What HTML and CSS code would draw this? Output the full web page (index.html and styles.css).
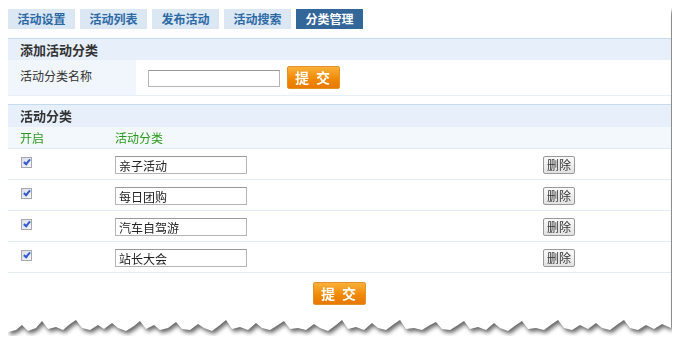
FILE: index.html
```html
<!DOCTYPE html>
<html lang="zh-CN">
<head>
    <meta charset="UTF-8">
    <title>分类管理</title>
    <link rel="stylesheet" href="styles.css">
</head>
<body>
    <div class="paper">
        <div class="panel">
            <div class="tabs">
                <a href="#">活动设置</a>
                <a href="#">活动列表</a>
                <a href="#">发布活动</a>
                <a href="#">活动搜索</a>
                <a href="#" class="active">分类管理</a>
            </div>

            <div class="section-title">添加活动分类</div>
            <div class="form-row">
                <div class="form-label">活动分类名称</div>
                <div class="form-field">
                    <input type="text" class="name-input">
                    <button class="btn-submit">提&nbsp;交</button>
                </div>
            </div>

            <div class="section-title second">活动分类</div>
            <div class="cat-head">
                <span class="col-on">开启</span>
                <span class="col-name">活动分类</span>
            </div>
            <div class="cat-row">
                <span class="col-on"><span class="check"></span></span>
                <span class="col-name"><input type="text" class="cat-input" value="亲子活动"></span>
                <button class="btn-del">删除</button>
            </div>
            <div class="cat-row">
                <span class="col-on"><span class="check"></span></span>
                <span class="col-name"><input type="text" class="cat-input" value="每日团购"></span>
                <button class="btn-del">删除</button>
            </div>
            <div class="cat-row">
                <span class="col-on"><span class="check"></span></span>
                <span class="col-name"><input type="text" class="cat-input" value="汽车自驾游"></span>
                <button class="btn-del">删除</button>
            </div>
            <div class="cat-row">
                <span class="col-on"><span class="check"></span></span>
                <span class="col-name"><input type="text" class="cat-input" value="站长大会"></span>
                <button class="btn-del">删除</button>
            </div>

            <div class="footer">
                <button class="btn-submit">提&nbsp;交</button>
            </div>
        </div>
    </div>
</body>
</html>
```

FILE: styles.css
```css
body {
    margin: 8px;
    background-color: #fff;
    font-family: "Noto Sans CJK SC", "DejaVu Sans", sans-serif;
    font-size: 12px;
    color: #333;
}
.paper {
    width: 663px;
    filter: drop-shadow(2px 3px 2px rgba(0, 0, 0, 0.6));
}
.panel {
    background-color: #fff;
    min-height: 328px;
    clip-path: polygon(0 324px, 8px 322px, 14px 317px, 20px 323px, 28px 320px, 34px 313px, 40px 321px, 48px 319px, 55px 322px, 62px 316px, 68px 312px, 74px 320px, 82px 322px, 90px 317px, 96px 321px, 104px 315px, 110px 320px, 118px 323px, 126px 318px, 132px 313px, 138px 321px, 146px 317px, 152px 322px, 160px 320px, 168px 314px, 174px 321px, 182px 322px, 190px 316px, 196px 320px, 204px 323px, 212px 317px, 218px 312px, 224px 321px, 232px 319px, 240px 322px, 248px 315px, 254px 320px, 262px 322px, 270px 317px, 276px 313px, 282px 321px, 290px 320px, 298px 322px, 306px 316px, 312px 320px, 320px 323px, 328px 317px, 334px 312px, 340px 321px, 348px 319px, 356px 322px, 364px 315px, 370px 320px, 378px 322px, 386px 316px, 392px 312px, 398px 321px, 406px 320px, 414px 322px, 422px 317px, 428px 314px, 434px 321px, 442px 322px, 450px 317px, 456px 313px, 462px 321px, 470px 319px, 478px 322px, 486px 315px, 492px 320px, 500px 323px, 508px 317px, 514px 313px, 520px 321px, 528px 320px, 536px 322px, 544px 316px, 550px 312px, 556px 320px, 564px 322px, 572px 317px, 580px 321px, 588px 315px, 594px 320px, 602px 322px, 610px 316px, 616px 312px, 622px 320px, 630px 322px, 638px 317px, 646px 321px, 654px 316px, 663px 320px, 663px 0, 0 0);
}

/* tabs */
.tabs {
    display: flex;
    gap: 5px;
    padding-top: 1px;
    height: 20px;
    margin-bottom: 9px;
}
.tabs a {
    width: 67px;
    height: 20px;
    line-height: 20px;
    text-align: center;
    text-decoration: none;
    font-weight: bold;
    color: #2c6aa5;
    background-color: #dbe7f3;
}
.tabs a.active {
    background-color: #336699;
    color: #fff;
}

/* section headers */
.section-title {
    height: 21px;
    line-height: 21px;
    padding-left: 12px;
    border-top: 1px solid #c6daee;
    background-color: #e7f0fa;
    font-size: 13px;
    font-weight: bold;
    color: #333;
}
.section-title.second {
    margin-top: 8px;
    height: 22px;
    line-height: 22px;
}

/* add form */
.form-row {
    display: flex;
    height: 35px;
    border-bottom: 1px solid #e6eef7;
}
.form-label {
    width: 116px;
    padding: 9px 0 0 12px;
    line-height: 14px;
    background-color: #f1f6fc;
}
.form-field {
    display: flex;
    align-items: center;
    gap: 7px;
    padding-left: 12px;
}
.name-input {
    width: 132px;
    height: 17px;
    box-sizing: border-box;
    margin: 2px 0 0;
    padding: 0 3px;
    border: 1px solid #b5b5b5;
    border-top-color: #999;
    font: inherit;
}
.btn-submit {
    width: 53px;
    height: 23px;
    padding: 0;
    border: 1px solid #e3922a;
    border-radius: 2px;
    background: linear-gradient(#fbb03a, #ef8704 60%, #e97900);
    color: #fff;
    font-family: inherit;
    font-size: 14px;
    font-weight: bold;
    line-height: 21px;
    letter-spacing: 2px;
    cursor: pointer;
}

/* category list */
.cat-head {
    display: flex;
    height: 21px;
    line-height: 21px;
    background-color: #f3f8fd;
    border-bottom: 1px solid #e0eaf5;
    color: #2b9a1c;
}
.col-on {
    width: 95px;
    padding-left: 12px;
}
.col-name {
    width: 428px;
}
.cat-row {
    display: flex;
    align-items: flex-start;
    height: 30px;
    border-bottom: 1px solid #e3ecf6;
}
.cat-row .col-on {
    padding-top: 8px;
}
.check {
    display: block;
    width: 9px;
    height: 9px;
    margin-left: 1px;
    border: 1px solid #a4a8b0;
    background: linear-gradient(135deg, #dcdde2, #f6f6f8);
    position: relative;
}
.check::after {
    content: "";
    position: absolute;
    left: 3px;
    top: 0;
    width: 2px;
    height: 5px;
    border: solid #2f5bd3;
    border-width: 0 2px 2px 0;
    transform: rotate(40deg);
}
.cat-input {
    width: 132px;
    height: 18px;
    box-sizing: border-box;
    margin: 7px 0 0;
    padding: 0 3px;
    border: 1px solid #b5b5b5;
    border-top-color: #999;
    font: inherit;
    color: #222;
}
.btn-del {
    width: 32px;
    height: 18px;
    margin-top: 7px;
    padding: 0;
    border: 1px solid #999;
    border-radius: 2px;
    background: linear-gradient(#fafafa, #e2e2e2);
    font: inherit;
    line-height: 16px;
    color: #333;
}

.footer {
    display: flex;
    justify-content: center;
    padding-top: 9px;
}
```
